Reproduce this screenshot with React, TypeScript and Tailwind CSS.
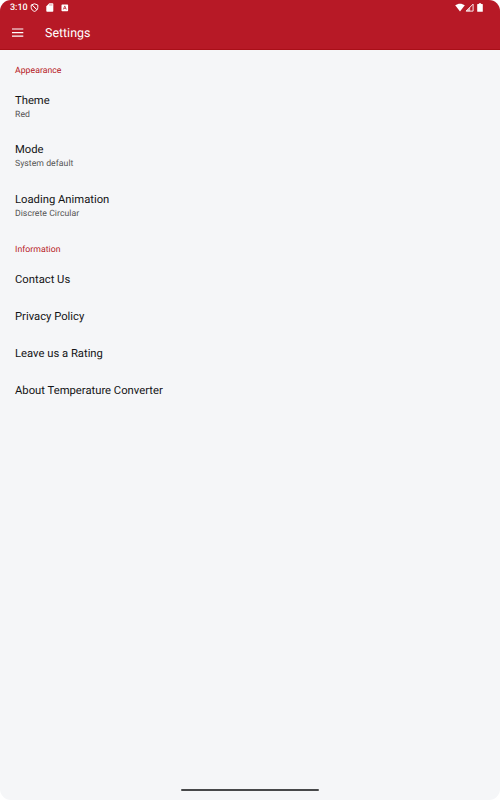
const items = ["Contact Us", "Privacy Policy", "Leave us a Rating", "About Temperature Converter"];
const prefs = [
  ["Theme", "Red"],
  ["Mode", "System default"],
  ["Loading Animation", "Discrete Circular"],
];

export default function App() {
  return (
    <div className="w-[500px] h-[800px] bg-white font-['Roboto',sans-serif] antialiased [text-rendering:geometricPrecision]">
      <div className="flex h-full flex-col overflow-hidden rounded-[11px] bg-[#f5f6f8]">
        <header className="h-[50px] shrink-0 border-b border-[#a90f18] bg-[#b71926] text-white">
          <div className="flex h-[15px] items-center justify-between pl-[10px] pr-[17px]">
            <div className="flex items-center">
              <span className="w-[20px] pt-[2px] text-[9px] font-medium leading-[15px]">3:10</span>
              <svg className="h-[9px] w-[9px]" viewBox="0 0 9 9" fill="none" stroke="currentColor" strokeWidth="1"><path d="M4.500.8 1.200 2v2.500c0 2 1.500 3.300 3.300 3.900C6.300 7.800 7.800 6.500 7.800 4.500V2zM2 1.800l4.900 5M3.300 3.200l2.500 2.500" /></svg>
              <svg className="ml-[7px] h-[9px] w-[8px]" viewBox="0 0 8 9"><path d="M3.300.2h3.200q.8 0 .8.800v6.900q0 .8-.8.800H1.100q-.8 0-.8-.8V3.200z" fill="currentColor" /><path d="M3.700 1.300v1.300M4.800 1.300v1.300M5.900 1.300v1.300" stroke="#b71926" strokeWidth=".4" /></svg>
              <svg className="ml-[7px] h-[8px] w-[8px]" viewBox="0 0 8 8"><rect x=".5" y=".4" width="6.600" height="6.800" rx=".7" fill="white" /><path d="m2.300 5.500 1.500-3.600 1.500 3.600M2.800 4.400h2" fill="none" stroke="#b71926" strokeWidth=".7" /></svg>
            </div>
            <div className="flex items-center">
              <svg className="h-[9px] w-[10px]" viewBox="0 0 10 9" fill="currentColor"><path d="M5 8.500.2 2.300C3 .1 7 .1 9.800 2.300z" /></svg>
              <svg className="h-[9px] w-[9px]" viewBox="0 0 9 9"><path d="M1.100 8.100h7V1.100z" fill="none" stroke="currentColor" strokeWidth=".9" /><path d="M1 8.300 5.200 4v4.300z" fill="currentColor" opacity=".65" /></svg>
              <svg className="ml-[3px] h-[9px] w-[6px]" viewBox="0 0 6 9" fill="currentColor"><path d="M.7 1.100h1.200V.2h2.200v.9h1.200q.5 0 .5.500v6.700q0 .5-.5.500H.7q-.5 0-.5-.5V1.600q0-.5.5-.5z" /></svg>
            </div>
          </div>
          <div className="flex h-[35px] items-center pl-[12px]">
            <svg className="h-[9px] w-[12px]" viewBox="0 0 12 9" fill="currentColor"><path d="M0 .4h11.300v1.200H0zM0 4h11.300v1.200H0zM0 7.600h11.300v1.200H0z" /></svg>
            <h1 className="ml-[21px] pt-[2px] text-[12.450px] leading-[18px]">Settings</h1>
          </div>
        </header>
        <main className="flex-1 pl-[15px] text-[#141416]">
          <h2 className="mt-[15px] text-[8.700px] leading-[12px] tracking-[0.030px] text-[#b71926]">Appearance</h2>
          <div className="mt-[16px] flex flex-col gap-[21.400px]">
            {prefs.map(([title, value]) => (
              <div key={title} className="h-[28px]">
                <div className="text-[11.250px] leading-[16px]">{title}</div>
                <div className="text-[8.700px] leading-[12px] tracking-[0.030px] text-[#555]">{value}</div>
              </div>
            ))}
          </div>
          <h2 className="mt-[24.400px] text-[8.700px] leading-[12px] tracking-[0.030px] text-[#b71926]">Information</h2>
          <div className="mt-[6px]">
            {items.map((item) => (
              <div key={item} className="flex h-[36.900px] items-center text-[11.250px]">{item}</div>
            ))}
          </div>
        </main>
        <div className="mx-auto mb-[9px] h-[2px] w-[138px] rounded-full bg-[#47484a]" />
      </div>
    </div>
  );
}
